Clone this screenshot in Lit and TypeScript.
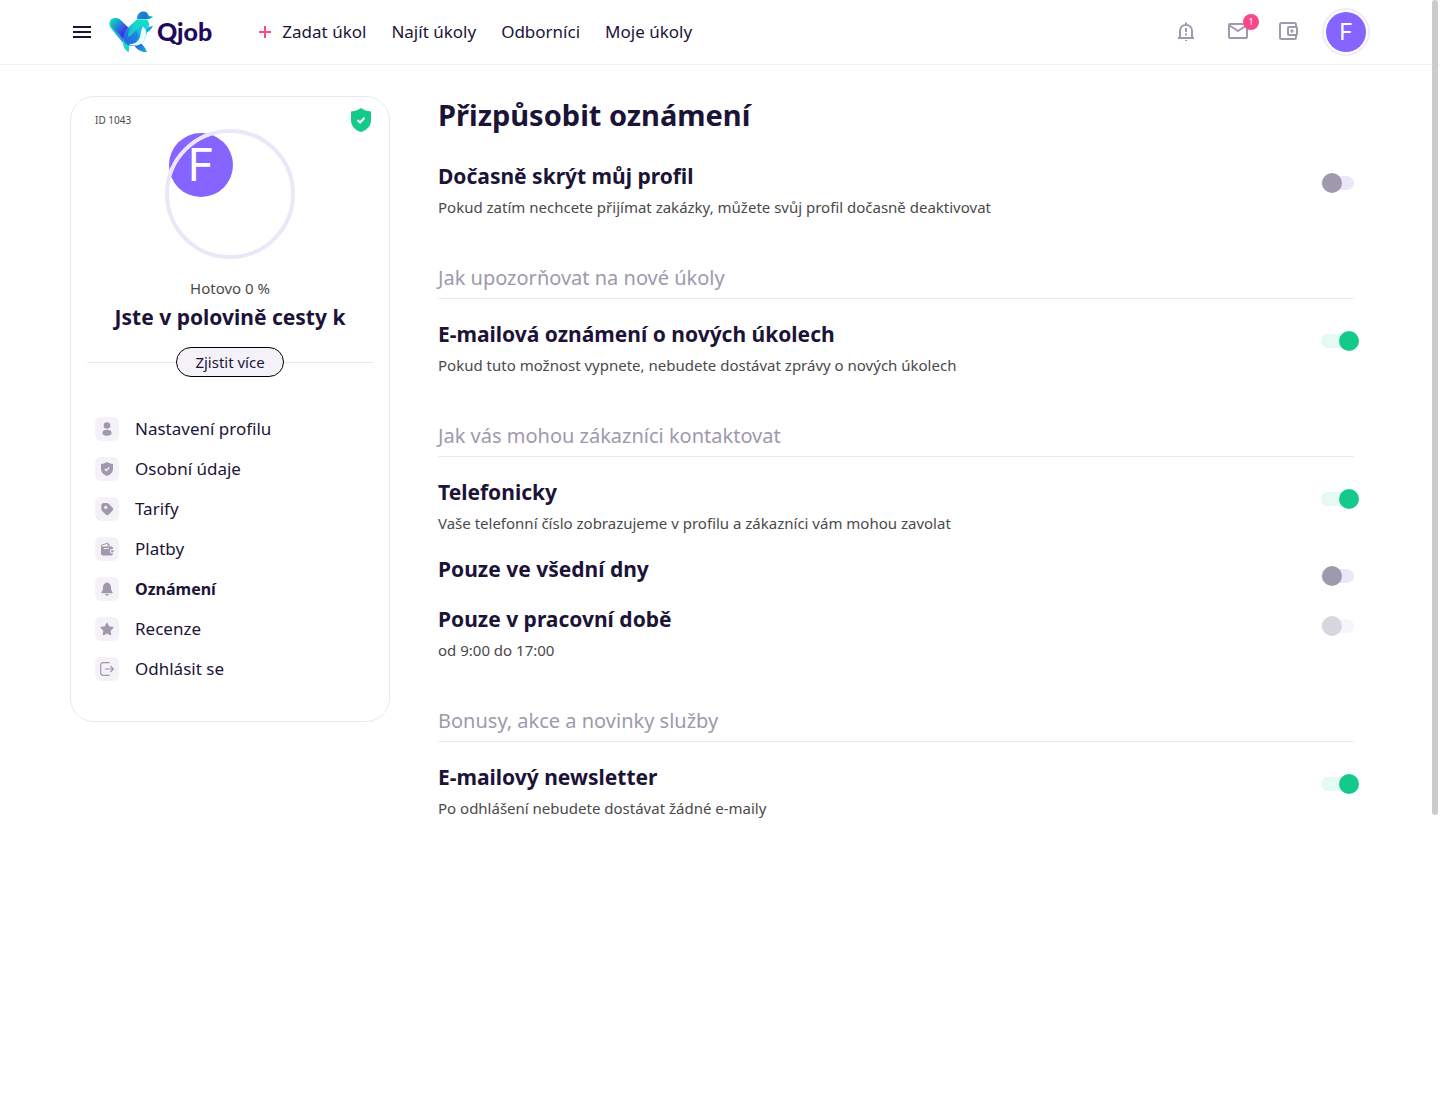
import { LitElement, html, css, svg, nothing } from "lit";
import { customElement, property, state } from "lit/decorators.js";

const menuIcons: Record<string, unknown> = {
  user: svg`<circle cx="12" cy="8.5" r="3.3"/><path d="M12 12.800c2.900 0 4.600 1.100 4.600 3s-1.700 3-4.600 3-4.600-1.100-4.600-3 1.700-3 4.600-3z"/>`,
  shield: svg`<path d="M12 5c1.800 1.200 3.600 1.800 6 2v5.200c0 3-2.300 5.300-6 6.800-3.700-1.500-6-3.800-6-6.800V7c2.400-.2 4.200-.8 6-2z"/><path d="m9.800 12 1.600 1.500 2.900-3" fill="none" stroke="#f4f2f8" stroke-width="1.300"/>`,
  tag: svg`<path d="M6.300 8.800c0-1.700.9-2.800 2.500-2.800h3c.8 0 1.400.2 1.900.7l3.700 3.700c1 1 1 2.300 0 3.300l-3.500 3.900c-1 1-2.300 1-3.300 0l-3.500-3.500c-.5-.5-.8-1.100-.8-1.900z"/><circle cx="10.700" cy="10.300" r="1.600" fill="#f4f2f8"/>`,
  wallet: svg`<path d="M6 9.400h10.200c1.100 0 1.800.7 1.800 1.800v.8h-1a2.200 2.200 0 0 0 0 4.400h1c0 1.300-.8 2-1.800 2H8c-1.300 0-2-.8-2-2z"/><path d="M6.400 9.600V8.300L13 6v3.200M13 7.500h1.200v1.800" fill="none" stroke="#9e99ad" stroke-width="1" stroke-linejoin="round"/><path d="M8.800 11.600h5" stroke="#f4f2f8" stroke-width="1"/><circle cx="17.300" cy="14.200" r="1.200"/>`,
  bell: svg`<path d="M12 5.200c.6 0 .9.300 1 .8 1.900.5 3 2.100 3 4.300 0 2.700.6 3.800 1.500 4.800.4.500.1 1.200-.6 1.200H7.100c-.7 0-1-.7-.6-1.200.9-1 1.500-2.100 1.500-4.800 0-2.200 1.100-3.800 3-4.300.1-.5.4-.8 1-.8zM10.300 17h3.400a1.700 1.700 0 0 1-3.400 0z"/>`,
  star: svg`<path d="m12 6.500 1.700 3.500 4 .6-2.900 2.800.7 4.100-3.500-1.900-3.500 1.900.7-4.100-2.900-2.800 4-.6z" stroke="#9e99ad" stroke-width="1.500" stroke-linejoin="round"/>`,
  exit: svg`<path d="M14.600 5.600H8.400c-1.700 0-2.700 1-2.700 2.700v7.400c0 1.700 1 2.700 2.700 2.700h6.200M9.800 12h8.600M15.400 9l3 3-3 3" fill="none" stroke="#9e99ad" stroke-width="1.200"/>`,
};

@customElement("menu-icon")
class MenuIcon extends LitElement {
  @property() name = "";
  static styles = css`
    :host { display: block; width: 24px; height: 24px; border-radius: 6px; background: #f4f2f8; }
    svg { display: block; fill: #9e99ad; }
  `;
  render() {
    return html`<svg width="24" height="24" viewBox="0 0 24 24" aria-hidden="true">${menuIcons[this.name]}</svg>`;
  }
}

@customElement("setting-row")
class SettingRow extends LitElement {
  @property() label = "";
  @property() note = "";
  @property({ type: Boolean }) checked = false;
  @property({ type: Boolean }) disabled = false;
  static styles = css`
    :host { display: block; }
    .row { display: flex; align-items: flex-start; justify-content: space-between; gap: 24px; }
    .text { display: flex; flex-direction: column; gap: 5px; }
    .label { font-size: 21px; line-height: 30px; font-weight: 700; color: #1c1438; }
    .note { margin: 0; font-size: 15px; line-height: 22px; color: #4a4a4a; }
    .switch {
      appearance: none; flex: none; display: flex; align-items: center; margin: 15px 0 0;
      width: 33px; height: 14px; border-radius: 7px; background: #ebe7f8; cursor: pointer;
    }
    .switch::before {
      content: ""; flex: none; width: 20px; height: 20px; border-radius: 50%;
      margin-left: 1px; background: #9e99ad;
    }
    .switch:checked { background: #e6f9f3; }
    .switch:checked::before { margin-left: 18px; background: #14ca8a; }
    .switch:disabled { opacity: 0.4; cursor: default; }
  `;
  render() {
    return html`
      <div class="row">
        <div class="text">
          <label class="label" for="switch">${this.label}</label>
          ${this.note ? html`<p class="note">${this.note}</p>` : nothing}
        </div>
        <input class="switch" id="switch" type="checkbox" role="switch" .checked=${this.checked} ?disabled=${this.disabled}
          @change=${(e: Event) => (this.checked = (e.target as HTMLInputElement).checked)} />
      </div>
    `;
  }
}

interface Setting { label: string; note?: string; on?: boolean; disabled?: boolean }
interface Group { heading?: string; settings: Setting[] }

const groups: Group[] = [
  { settings: [{ label: "Dočasně skrýt můj profil", note: "Pokud zatím nechcete přijímat zakázky, můžete svůj profil dočasně deaktivovat" }] },
  { heading: "Jak upozorňovat na nové úkoly", settings: [
    { label: "E-mailová oznámení o nových úkolech", note: "Pokud tuto možnost vypnete, nebudete dostávat zprávy o nových úkolech", on: true },
  ] },
  { heading: "Jak vás mohou zákazníci kontaktovat", settings: [
    { label: "Telefonicky", note: "Vaše telefonní číslo zobrazujeme v profilu a zákazníci vám mohou zavolat", on: true },
    { label: "Pouze ve všední dny" },
    { label: "Pouze v pracovní době", note: "od 9:00 do 17:00", disabled: true },
  ] },
  { heading: "Bonusy, akce a novinky služby", settings: [
    { label: "E-mailový newsletter", note: "Po odhlášení nebudete dostávat žádné e-maily", on: true },
  ] },
];

const menu = [
  ["user", "Nastavení profilu"],
  ["shield", "Osobní údaje"],
  ["tag", "Tarify"],
  ["wallet", "Platby"],
  ["bell", "Oznámení"],
  ["star", "Recenze"],
  ["exit", "Odhlásit se"],
];

@customElement("app-root")
class AppRoot extends LitElement {
  @state() private active = "bell";

  static styles = css`
    :host { display: block; position: relative; min-height: 100vh; background: #fff; color: #1c1438;
      font-family: "Noto Sans", sans-serif; font-size: 17px; line-height: 24px; }
    * { box-sizing: border-box; }
    a { color: inherit; text-decoration: none; }
    button { font: inherit; color: inherit; cursor: pointer; }
    .wrap { max-width: 1300px; margin: 0 auto; }
    .top { border-bottom: 1px solid #f1f1f3; }
    .bar { display: flex; align-items: center; height: 64px; }
    .plain { display: flex; padding: 0; border: 0; background: none; }
    .logo { display: flex; align-items: center; gap: 2px; margin-left: 15px; }
    .brand { padding-bottom: 3px; font-family: Lato, sans-serif; font-weight: 900; font-size: 25px; line-height: 32px; color: #200a5c; }
    .links { display: flex; gap: 25px; margin-left: 46px; }
    .links a { display: flex; align-items: center; gap: 10px; }
    .tools { display: flex; align-items: center; gap: 21px; margin-left: auto; color: #9e99ad; }
    .alerts { display: flex; gap: 27px; }
    .mail { position: relative; }
    .badge { position: absolute; left: 17px; top: -6px; width: 16px; height: 16px; border-radius: 50%;
      background: #fc468c; color: #fff; font-size: 9px; line-height: 16px; text-align: center; }
    .me { display: flex; align-items: center; justify-content: center; width: 48px; height: 48px; border-radius: 50%;
      border: 2px solid #f0ecfb; padding: 2px; }
    .face { display: flex; align-items: center; justify-content: center; width: 100%; height: 100%; border-radius: 50%;
      background: #8564ff; color: #fff; font-family: Inter, sans-serif; font-size: 23px; line-height: 32px; }
    .page { display: flex; align-items: flex-start; gap: 48px; padding-top: 31px; }
    .card { flex: none; width: 320px; border: 1px solid #ebe7f8; border-radius: 24px; padding: 11px 16px 40px; }
    .meta { display: flex; align-items: center; justify-content: space-between; height: 24px; padding-left: 8px;
      font-size: 10px; line-height: 16px; color: #4a4a4a; }
    .ring { position: relative; width: 130px; height: 130px; margin: -3px auto 0; padding: 4px; }
    .ring::after { content: ""; position: absolute; inset: 0; border: 4px solid #ebe7f8; border-radius: 50%; }
    .big { width: 64px; height: 64px; font-size: 45px; }
    .done { margin: 18px 0 0; font-size: 15px; line-height: 22px; text-align: center; color: #4a4a4a; }
    .half { margin: 3px 0 0; font-size: 21px; line-height: 30px; font-weight: 700; text-align: center; white-space: nowrap; }
    .more { display: flex; align-items: center; margin-top: 15px; }
    .more::before, .more::after { content: ""; flex: 1; height: 1px; background: #ebe7f8; }
    .pill { height: 30px; padding: 0 18px; border: 1px solid #000; border-radius: 15px; background: #f4f2f8;
      font-size: 15px; line-height: 22px; }
    .menu { display: flex; flex-direction: column; gap: 16px; margin: 40px 0 0; padding: 0 8px; list-style: none; }
    .menu a { display: flex; align-items: center; gap: 16px; }
    .menu .active { font-size: 16px; font-weight: 700; }
    .main { flex: 1; min-width: 0; margin-right: 16px; }
    h1 { margin: 0 0 27px; font-size: 29px; line-height: 38px; font-weight: 700; }
    h2 { margin: 0; padding-bottom: 5px; border-bottom: 1px solid #ebe7f8; font-size: 20px; line-height: 30px;
      font-weight: 400; color: #9e99ad; }
    .group { display: flex; flex-direction: column; gap: 20px; margin-bottom: 45px; }
    .thumb { position: absolute; top: 0; right: 2px; width: 6px; height: 815px; border-radius: 3px; background: #cbcbcb; }
  `;

  private bird() {
    return html`<svg width="46" height="42" viewBox="0 0 46 42" aria-hidden="true">
      <defs>
        <linearGradient id="wing" gradientUnits="userSpaceOnUse" x1="2" y1="8" x2="24" y2="28">
          <stop offset="0" stop-color="#10e2b4"/><stop offset=".3" stop-color="#1f8fdc"/><stop offset=".7" stop-color="#5416e6"/><stop offset="1" stop-color="#2a5be6"/>
        </linearGradient>
        <linearGradient id="lower" gradientUnits="userSpaceOnUse" x1="1" y1="13" x2="15" y2="31">
          <stop offset="0" stop-color="#12e0b8"/><stop offset="1" stop-color="#2486e4"/>
        </linearGradient>
        <linearGradient id="body" gradientUnits="userSpaceOnUse" x1="36" y1="10" x2="16" y2="33">
          <stop offset="0" stop-color="#16e2c4"/><stop offset=".35" stop-color="#18c0e0"/><stop offset="1" stop-color="#2468e8"/>
        </linearGradient>
        <linearGradient id="head" x1="0" y1="0" x2="1" y2="0">
          <stop offset="0" stop-color="#1e8fd8"/><stop offset=".55" stop-color="#1875d2"/><stop offset="1" stop-color="#0ce0c8"/>
        </linearGradient>
        <linearGradient id="foot" x1="0" y1="0" x2="1" y2="1">
          <stop offset="0" stop-color="#2850dc"/><stop offset="1" stop-color="#16b4dc"/>
        </linearGradient>
      </defs>
      <path d="M2 8.500C4.500 6 9.500 6.500 12 9.500L23 21l-7 13C11 28 4 20.500 1.200 16 0 13.500 0 10.500 2 8.500z" fill="url(#lower)"/>
      <path d="M2.500 8.500C5 6 9.500 6.500 12 9.500L24 21l-6 10L4 17C1.500 14.500 1 10.500 2.500 8.500z" fill="url(#wing)"/>
      <path d="M14.500 28c-1.200 5.500 0 10 5 13.200.8-3 1-6 .5-9z" fill="#1ed8c4"/>
      <path d="M25.500 35c2.300-.5 4.500-1.500 6-3 2.500 2 5 5 6.500 9-5 .5-9.500-2-12.500-6z" fill="url(#foot)"/>
      <path d="M35 16.500c3 0 6-.5 9-1.800-1.500 4-5 6.800-9 7.800z" fill="#1b9fdc"/>
      <path d="M28 8.500h9.500c3.500 2.500 3.500 7 .5 10 0 9-4 16.500-14.500 16.500-6 0-9.500-4-9-9.500C15 19 21 15 28 8.500z" fill="url(#body)"/>
      <circle cx="22" cy="25" r="7.200" fill="#2a55e0" opacity=".4"/>
      <path d="M39 9c-2 6-8 5.500-11 9.500-3 3-5 5.500-9 7.500 0-7 4-12 10-17.500z" fill="#14dcc4" opacity=".75"/>
      <path d="M34 15.500c3.500 2.500 4 8 2 12.500-2.500 5-7 7-12.500 6.500-1.500-.2-2.700-.7-3.500-1.500 6 .5 10.500-3 11.500-9 .4-3 1-6 2.500-8.500z" fill="#e9fffa"/>
      <path d="M28 8c0-5 3-7.500 6.300-7.500 2.700 0 4.700 1.500 5.200 4L44.500 6l-4 2z" fill="url(#head)"/>
    </svg>`;
  }

  render() {
    return html`
      <header class="top">
        <div class="wrap bar">
          <button class="plain" aria-label="Menu">
            <svg width="24" height="24" viewBox="0 0 24 24" fill="#1c1438"><path d="M3 6h18v2H3zM3 11h18v2H3zM3 16h18v2H3z"/></svg>
          </button>
          <a class="logo" href="#">${this.bird()}<span class="brand">Qjob</span></a>
          <nav class="links">
            <a href="#"><svg width="14" height="14" viewBox="0 0 14 14" stroke="#fc468c" stroke-width="2" aria-hidden="true"><path d="M7 1v12M1 7h12"/></svg>Zadat úkol</a>
            <a href="#">Najít úkoly</a>
            <a href="#">Odborníci</a>
            <a href="#">Moje úkoly</a>
          </nav>
          <div class="tools">
            <div class="alerts">
              <button class="plain" aria-label="Oznámení">
                <svg width="24" height="24" viewBox="0 0 24 24" fill="none" stroke="currentColor" stroke-width="2"><path d="M5 18v-7c0-3.500 2.500-6 6-6s6 2.500 6 6v7M3 18h16M11 2.500V5M11 20v1"/><path d="M11 8v4M11 13.500v2"/></svg>
              </button>
              <button class="plain mail" aria-label="Zprávy">
                <svg width="24" height="24" viewBox="0 0 24 24" fill="none" stroke="currentColor" stroke-width="2" stroke-linejoin="round"><rect x="3" y="4" width="18" height="14" rx="1"/><path d="m3.500 5.500 8.500 5.500 8.500-5.500"/></svg>
                <span class="badge">1</span>
              </button>
              <button class="plain" aria-label="Peněženka">
                <svg width="24" height="24" viewBox="0 0 24 24" fill="none" stroke="currentColor" stroke-width="2" stroke-linejoin="round"><path d="M19 7V4.500A1.500 1.500 0 0 0 17.500 3h-13A1.500 1.500 0 0 0 3 4.500v13A1.500 1.500 0 0 0 4.500 19h13a1.500 1.500 0 0 0 1.500-1.500V15"/><rect x="11" y="7" width="9" height="8" rx="1"/><circle cx="15" cy="11" r=".7"/></svg>
              </button>
            </div>
            <a class="me" href="#" aria-label="Profil"><span class="face">F</span></a>
          </div>
        </div>
      </header>
      <div class="wrap page">
        <aside class="card">
          <div class="meta">
            <span>ID 1043</span>
            <svg width="24" height="24" viewBox="0 0 24 24" aria-hidden="true"><path d="M12 0c2.500 2 6 3.200 10 3.500V12c0 6-4 10-10 12C6 22 2 18 2 12V3.500C6 3.200 9.500 2 12 0z" fill="#14ca8a"/><path d="m8.500 12 2.600 2.500 4.400-4.700" fill="none" stroke="#fff" stroke-width="2"/></svg>
          </div>
          <div class="ring"><div class="face big">F</div></div>
          <p class="done">Hotovo 0 %</p>
          <p class="half">Jste v polovině cesty k</p>
          <div class="more"><button class="pill">Zjistit více</button></div>
          <ul class="menu">
            ${menu.map(([icon, label]) => html`<li><a href="#" class=${icon === this.active ? "active" : ""}
              @click=${(e: Event) => { e.preventDefault(); this.active = icon; }}><menu-icon name=${icon}></menu-icon>${label}</a></li>`)}
          </ul>
        </aside>
        <main class="main">
          <h1>Přizpůsobit oznámení</h1>
          ${groups.map((g) => html`<section class="group">
            ${g.heading ? html`<h2>${g.heading}</h2>` : nothing}
            ${g.settings.map((s) => html`<setting-row .label=${s.label} .note=${s.note ?? ""} .checked=${!!s.on} .disabled=${!!s.disabled}></setting-row>`)}
          </section>`)}
        </main>
      </div>
      <div class="thumb" aria-hidden="true"></div>
    `;
  }
}
